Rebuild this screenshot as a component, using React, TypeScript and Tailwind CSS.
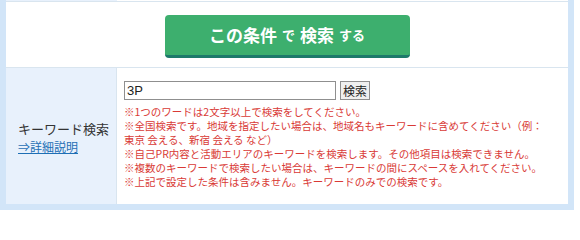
import React from "react";

const jp = { fontFamily: '"Noto Sans CJK JP", "Noto Sans", sans-serif' } as React.CSSProperties;

export default function App() {
  return (
    <div className="w-[580px] h-[214px] bg-white overflow-hidden" style={jp}>
      <div className="w-[574px] border-x-[6px] border-b-[6px] border-[#d2e5f8]">
        {/* previous row remnant */}
        <div className="flex h-px">
          <div className="w-[111px] bg-[#e8f1fc]" />
          <div className="flex-1 bg-white" />
        </div>
        {/* button row */}
        <div className="h-[66px] border-t border-[#d9e5ef] bg-white flex items-center justify-center">
          <button className="w-[245px] h-[43px] mt-[3px] rounded-[4px] bg-[#3daf6e] border-b-[3px] border-[#1d7a6b] text-white font-bold flex items-center justify-center gap-[5px]">
            <span className="text-[17px] leading-none">この条件</span>
            <span className="text-[13px] leading-none">で</span>
            <span className="text-[17px] leading-none">検索</span>
            <span className="text-[13px] leading-none">する</span>
          </button>
        </div>
        {/* keyword row */}
        <div className="flex border-t border-[#d9e5ef]">
          <div className="w-[111px] bg-[#e8f1fc] border-r border-[#d9e5ef] flex flex-col justify-center pl-[12px] pt-[2px]">
            <div className="text-[13px] leading-[18px] text-[#333]">キーワード検索</div>
            <a href="#" className="text-[12px] leading-[17px] text-[#1e6fb5] underline">⇒詳細説明</a>
          </div>
          <div className="flex-1 bg-white pl-[7px] pt-[13px] pb-[15px]">
            <div className="flex items-center gap-[4px]">
              <input
                defaultValue="3P"
                className="w-[212px] h-[19px] border border-[#8f8f8f] px-[2px] text-[13px] text-[#222] outline-none"
                style={{ fontFamily: '"Liberation Sans", Arial, sans-serif' }}
              />
              <button className="h-[19px] px-[2px] border border-[#8f8f8f] bg-[#efefef] text-[12px] leading-none text-[#222]">検索</button>
            </div>
            <div className="mt-[5px] text-[10.5px] leading-[14px] text-[#d93a36]">
              <div>※1つのワードは2文字以上で検索をしてください。</div>
              <div>
                ※全国検索です。地域を指定したい場合は、地域名もキーワードに含めてください（例：
                <br />
                東京 会える、新宿 会える など）
              </div>
              <div>※自己PR内容と活動エリアのキーワードを検索します。その他項目は検索できません。</div>
              <div>※複数のキーワードで検索したい場合は、キーワードの間にスペースを入れてください。</div>
              <div>※上記で設定した条件は含みません。キーワードのみでの検索です。</div>
            </div>
          </div>
        </div>
      </div>
    </div>
  );
}
